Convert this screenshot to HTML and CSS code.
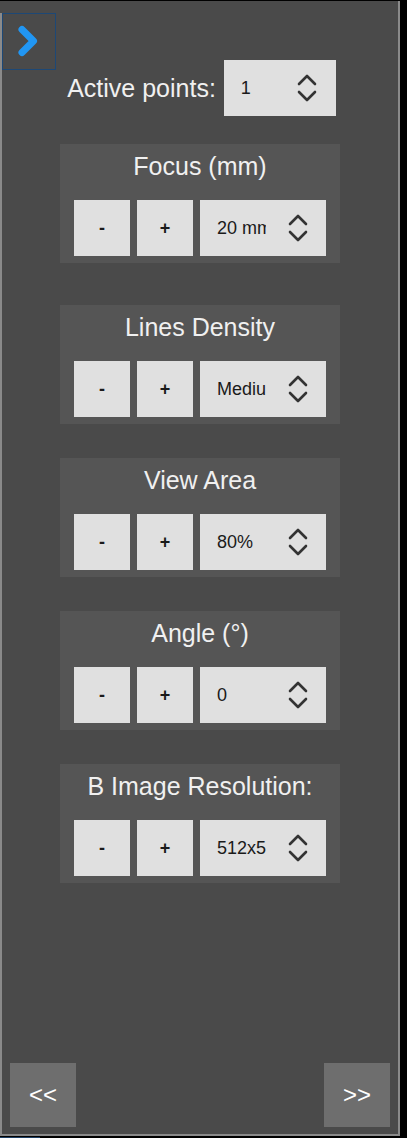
FILE: index.html
```html
<!DOCTYPE html>
<html>
<head>
<meta charset="utf-8">
<link rel="stylesheet" href="styles.css">
</head>
<body>
<div class="panel">
  <button class="toggle" aria-label="Collapse">
    <svg width="54" height="57" viewBox="0 0 54 57"><path d="M20 16.5 L31.5 28 L20 39.5" fill="none" stroke="#2196f3" stroke-width="7" stroke-linecap="round" stroke-linejoin="round"/></svg>
  </button>

  <div class="active-row">
    <span class="active-label">Active points:</span>
    <div class="spin active-input">
      <span class="spin-text">1</span>
      <svg class="updown" width="20" height="30" viewBox="0 0 20 30"><path d="M2 11 L10 3 L18 11 M2 19 L10 27 L18 19" fill="none" stroke="#333" stroke-width="2.6" stroke-linecap="round" stroke-linejoin="round"/></svg>
    </div>
  </div>

  <div class="sections">
    <div class="section first">
      <div class="section-title">Focus (mm)</div>
      <div class="controls">
        <button class="step">-</button>
        <button class="step">+</button>
        <div class="spin select">
          <span class="spin-text clip">20 mm</span>
          <svg class="updown" width="20" height="30" viewBox="0 0 20 30"><path d="M2 11 L10 3 L18 11 M2 19 L10 27 L18 19" fill="none" stroke="#333" stroke-width="2.6" stroke-linecap="round" stroke-linejoin="round"/></svg>
        </div>
      </div>
    </div>

    <div class="section">
      <div class="section-title">Lines Density</div>
      <div class="controls">
        <button class="step">-</button>
        <button class="step">+</button>
        <div class="spin select">
          <span class="spin-text clip">Medium</span>
          <svg class="updown" width="20" height="30" viewBox="0 0 20 30"><path d="M2 11 L10 3 L18 11 M2 19 L10 27 L18 19" fill="none" stroke="#333" stroke-width="2.6" stroke-linecap="round" stroke-linejoin="round"/></svg>
        </div>
      </div>
    </div>

    <div class="section">
      <div class="section-title">View Area</div>
      <div class="controls">
        <button class="step">-</button>
        <button class="step">+</button>
        <div class="spin select">
          <span class="spin-text clip">80%</span>
          <svg class="updown" width="20" height="30" viewBox="0 0 20 30"><path d="M2 11 L10 3 L18 11 M2 19 L10 27 L18 19" fill="none" stroke="#333" stroke-width="2.6" stroke-linecap="round" stroke-linejoin="round"/></svg>
        </div>
      </div>
    </div>

    <div class="section">
      <div class="section-title">Angle (°)</div>
      <div class="controls">
        <button class="step">-</button>
        <button class="step">+</button>
        <div class="spin select">
          <span class="spin-text clip">0</span>
          <svg class="updown" width="20" height="30" viewBox="0 0 20 30"><path d="M2 11 L10 3 L18 11 M2 19 L10 27 L18 19" fill="none" stroke="#333" stroke-width="2.6" stroke-linecap="round" stroke-linejoin="round"/></svg>
        </div>
      </div>
    </div>

    <div class="section">
      <div class="section-title">B Image Resolution:</div>
      <div class="controls">
        <button class="step">-</button>
        <button class="step">+</button>
        <div class="spin select">
          <span class="spin-text clip">512x512</span>
          <svg class="updown" width="20" height="30" viewBox="0 0 20 30"><path d="M2 11 L10 3 L18 11 M2 19 L10 27 L18 19" fill="none" stroke="#333" stroke-width="2.6" stroke-linecap="round" stroke-linejoin="round"/></svg>
        </div>
      </div>
    </div>
  </div>

  <div class="nav">
    <button class="nav-btn">&lt;&lt;</button>
    <button class="nav-btn">&gt;&gt;</button>
  </div>
</div>
<div class="bottom-strip"></div>
</body>
</html>
```

FILE: styles.css
```css
html, body {
  margin: 0;
  padding: 0;
  background: #000;
}

body {
  font-family: "Liberation Sans", Arial, sans-serif;
}

button {
  font-family: "Liberation Sans", Arial, sans-serif;
  border: none;
  margin: 0;
  padding: 0;
  cursor: pointer;
}

.panel {
  position: relative;
  box-sizing: border-box;
  width: 400px;
  height: 1135px;
  margin-top: 1px;
  background: #4a4a4a;
  border-right: 2px solid #8a8a8a;
  border-bottom: 2px solid #8a8a8a;
  padding: 59px 8px 7px 10px;
  display: flex;
  flex-direction: column;
}

.panel::before {
  content: "";
  position: absolute;
  left: 0;
  top: 12px;
  bottom: 0;
  width: 2px;
  background: #8a8a8a;
}

.toggle {
  position: absolute;
  left: 2px;
  top: 12px;
  box-sizing: border-box;
  width: 54px;
  height: 57px;
  background: #4a4a4a;
  border: 1px solid #1d4876;
  padding: 0;
  display: block;
}

.toggle svg {
  position: absolute;
  left: -1px;
  top: -1px;
  display: block;
}

.active-row {
  display: flex;
  align-items: center;
  justify-content: center;
  gap: 8px;
  margin-left: 3px;
}

.active-label {
  color: #f0f0f0;
  font-size: 25px;
  line-height: 28px;
}

.spin {
  box-sizing: border-box;
  height: 56px;
  background: #e0e0e0;
  display: flex;
  align-items: center;
  padding-left: 17px;
  position: relative;
}

.spin-text {
  color: #1a1a1a;
  font-size: 18px;
  line-height: 21px;
  white-space: nowrap;
}

.clip {
  display: block;
  width: 49px;
  overflow: hidden;
}

.updown {
  display: block;
  margin-left: auto;
  margin-right: 18px;
}

.active-input {
  width: 112px;
}

.active-input .updown {
  margin-right: 19px;
}

.sections {
  display: flex;
  flex-direction: column;
  align-items: center;
  gap: 34px;
  margin-top: 28px;
}

.section {
  box-sizing: border-box;
  width: 280px;
  background: #555555;
  padding: 8px 14px 7px;
}

.section.first {
  margin-bottom: 8px;
}

.section-title {
  color: #f0f0f0;
  font-size: 25px;
  line-height: 28px;
  text-align: center;
  white-space: nowrap;
}

.controls {
  display: flex;
  gap: 7px;
  margin-top: 20px;
}

.step {
  width: 56px;
  height: 56px;
  background: #e0e0e0;
  color: #1a1a1a;
  font-size: 18px;
  font-weight: bold;
  line-height: 56px;
}

.select {
  width: 126px;
}

.nav {
  margin-top: auto;
  display: flex;
  justify-content: space-between;
}

.nav-btn {
  width: 66px;
  height: 64px;
  background: #6e6e6e;
  color: #ffffff;
  font-size: 24px;
  line-height: 64px;
}

.bottom-strip {
  width: 40px;
  height: 1px;
  margin-top: 1px;
  background: #1e3f63;
}
```
